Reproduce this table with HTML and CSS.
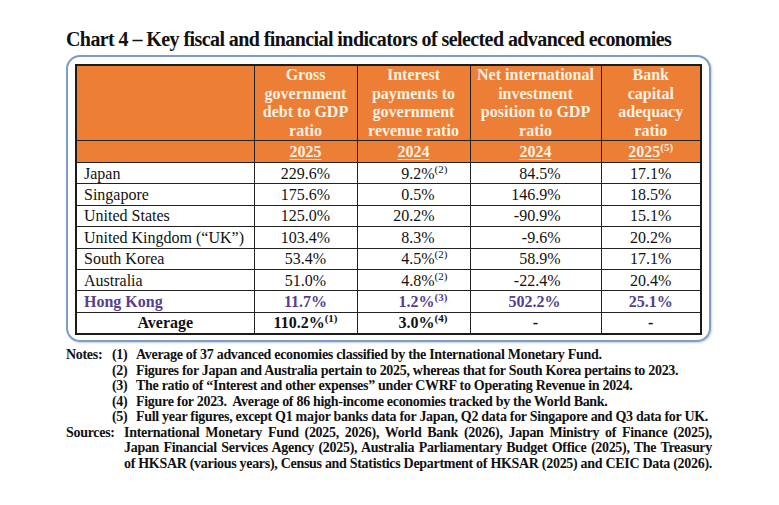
FILE: index.html
```html
<!DOCTYPE html>
<html lang="en">
<head>
<meta charset="utf-8">
<title>Chart 4</title>
<link rel="stylesheet" href="styles.css">
</head>
<body>
<div class="page">
  <h1 class="title">Chart 4 – Key fiscal and financial indicators of selected advanced economies</h1>
  <div class="box">
    <table class="grid">
      <colgroup>
        <col class="c1"><col class="c2"><col class="c3"><col class="c4"><col class="c5">
      </colgroup>
      <thead>
        <tr class="head">
          <th></th>
          <th>Gross<br>government<br>debt to GDP<br>ratio</th>
          <th>Interest<br>payments to<br>government<br>revenue ratio</th>
          <th>Net international<br>investment<br>position to GDP<br>ratio</th>
          <th>Bank<br>capital<br>adequacy<br>ratio</th>
        </tr>
        <tr class="years">
          <th></th>
          <th><u>2025</u></th>
          <th><u>2024</u></th>
          <th><u>2024</u></th>
          <th><u>2025</u><sup>(5)</sup></th>
        </tr>
      </thead>
      <tbody>
        <tr><td class="name">Japan</td><td class="ctr">229.6%</td><td class="dec"><span class="n">9.2%</span><sup>(2)</sup></td><td class="rt">84.5%</td><td class="ctr">17.1%</td></tr>
        <tr><td class="name">Singapore</td><td class="ctr">175.6%</td><td class="dec"><span class="n">0.5%</span></td><td class="rt">146.9%</td><td class="ctr">18.5%</td></tr>
        <tr><td class="name">United States</td><td class="ctr">125.0%</td><td class="dec"><span class="n">20.2%</span></td><td class="rt">-90.9%</td><td class="ctr">15.1%</td></tr>
        <tr><td class="name">United Kingdom (“UK”)</td><td class="ctr">103.4%</td><td class="dec"><span class="n">8.3%</span></td><td class="rt">-9.6%</td><td class="ctr">20.2%</td></tr>
        <tr><td class="name">South Korea</td><td class="ctr">53.4%</td><td class="dec"><span class="n">4.5%</span><sup>(2)</sup></td><td class="rt">58.9%</td><td class="ctr">17.1%</td></tr>
        <tr><td class="name">Australia</td><td class="ctr">51.0%</td><td class="dec"><span class="n">4.8%</span><sup>(2)</sup></td><td class="rt">-22.4%</td><td class="ctr">20.4%</td></tr>
        <tr class="hk"><td class="name">Hong Kong</td><td class="ctr">11.7%</td><td class="dec"><span class="n">1.2%</span><sup>(3)</sup></td><td class="rt">502.2%</td><td class="ctr">25.1%</td></tr>
        <tr class="avg"><td class="ctr">Average</td><td class="ctr">110.2%<sup>(1)</sup></td><td class="dec"><span class="n">3.0%</span><sup>(4)</sup></td><td class="ctr">-</td><td class="ctr">-</td></tr>
      </tbody>
    </table>
  </div>
  <div class="notes">
    <div class="lbl">Notes:</div><div class="num">(1)</div><div class="txt">Average of 37 advanced economies classified by the International Monetary Fund.</div>
    <div></div><div class="num">(2)</div><div class="txt">Figures for Japan and Australia pertain to 2025, whereas that for South Korea pertains to 2023.</div>
    <div></div><div class="num">(3)</div><div class="txt">The ratio of “Interest and other expenses” under CWRF to Operating Revenue in 2024.</div>
    <div></div><div class="num">(4)</div><div class="txt">Figure for 2023.&nbsp; Average of 86 high-income economies tracked by the World Bank.</div>
    <div></div><div class="num">(5)</div><div class="txt">Full year figures, except Q1 major banks data for Japan, Q2 data for Singapore and Q3 data for UK.</div>
  </div>
  <div class="sources">
    <div class="lbl">Sources:</div>
    <div class="txt">International Monetary Fund (2025, 2026), World Bank (2026), Japan Ministry of Finance (2025),<br>Japan Financial Services Agency (2025), Australia Parliamentary Budget Office (2025), The Treasury<br>of HKSAR (various years), Census and Statistics Department of HKSAR (2025) and CEIC Data (2026).</div>
  </div>
</div>
</body>
</html>
```
FILE: styles.css
```css
html, body {
  margin: 0;
  padding: 0;
  background: #ffffff;
}
.page {
  font-family: "Liberation Serif", "Times New Roman", serif;
  color: #111;
  padding: 28px 0 0 66px;
  width: 644px;
}
.title {
  margin: 0;
  font-size: 20px;
  line-height: 22px;
  font-weight: bold;
  letter-spacing: -0.58px;
  white-space: nowrap;
}
.box {
  margin-top: 5px;
  width: 628px;
  border: 2px solid #7d9cc6;
  border-radius: 14px;
  padding: 7px 6px 5px 7px;
  box-shadow: 1px 1px 2px rgba(90, 120, 170, 0.35);
}
.grid {
  width: 626px;
  border-collapse: collapse;
  border: 2px solid #1b1b1b;
  table-layout: fixed;
  font-size: 16px;
}
.c1 { width: 178px; }
.c2 { width: 103px; }
.c3 { width: 113px; }
.c4 { width: 131px; }
.c5 { width: 100px; }
.grid th, .grid td {
  border: 1px solid #222;
  padding: 0;
}
.head th {
  background: #ec7e36;
  color: #fdf1e2;
  font-weight: bold;
  line-height: 18.5px;
  height: 73px;
  vertical-align: middle;
  text-align: center;
}
.years th {
  background: #ec7e36;
  color: #fdf1e2;
  height: 21px;
  line-height: 20px;
  text-align: center;
}
.years th u {
  text-decoration-thickness: 1px;
  text-underline-offset: 2px;
}
.grid tbody td {
  height: 20.4px;
  line-height: 19px;
  background: #fff;
}
.name { padding-left: 7px !important; text-align: left; }
.ctr { text-align: center; }
.rt { text-align: right; padding-right: 40px !important; }
.dec { text-align: left; padding-left: 35px !important; }
.dec .n { display: inline-block; width: 42px; text-align: right; }
sup {
  font-size: 11px;
  line-height: 0;
  vertical-align: 6px;
}
.hk td { color: #57408c; font-weight: bold; }
.avg td { font-weight: bold; }
.notes {
  margin-top: 5px;
  display: grid;
  grid-template-columns: 46px 24px 1fr;
  font-size: 14px;
  line-height: 15.5px;
  font-weight: bold;
  letter-spacing: -0.3px;
}
.notes .num { white-space: nowrap; }
.notes .txt { white-space: nowrap; }
.sources {
  display: grid;
  grid-template-columns: 58px 1fr;
  font-size: 14px;
  line-height: 15.5px;
  font-weight: bold;
  letter-spacing: -0.3px;
}
.sources .txt {
  text-align: justify;
  text-align-last: justify;
  white-space: nowrap;
}
```
